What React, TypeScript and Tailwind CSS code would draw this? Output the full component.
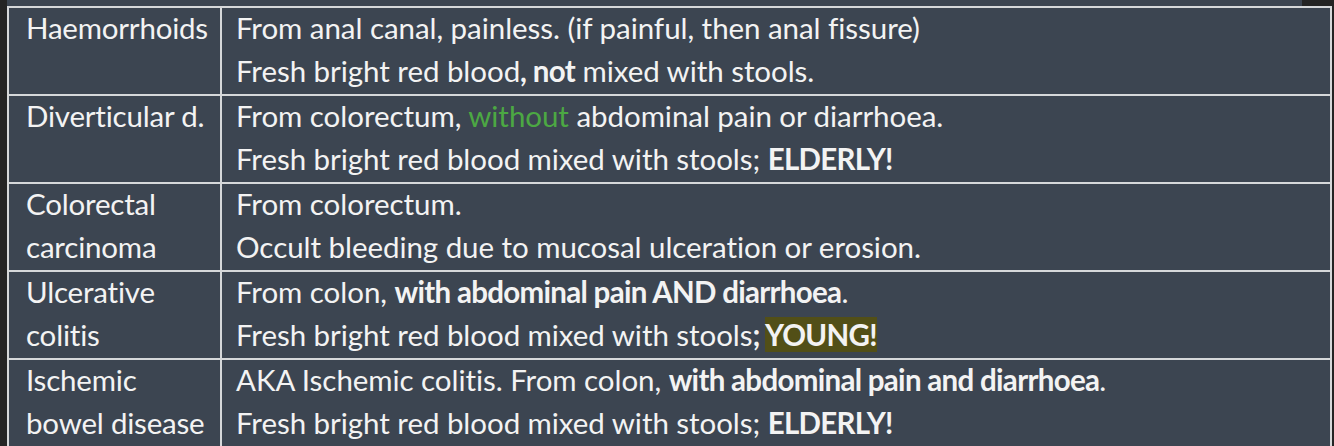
import type { ReactNode } from "react";

const B = ({ children }: { children: ReactNode }) => <b className="-tracking-[0.7px]">{children}</b>;

const rows: { name: ReactNode; lines: ReactNode[] }[] = [
  {
    name: "Haemorrhoids",
    lines: [
      "From anal canal, painless. (if painful, then anal fissure)",
      <>Fresh bright red blood<B>, not</B> mixed with stools.</>,
    ],
  },
  {
    name: "Diverticular d.",
    lines: [
      <>From colorectum, <span className="text-[#4ca843]">without</span> abdominal pain or diarrhoea.</>,
      <>Fresh bright red blood mixed with stools; <B>ELDERLY!</B></>,
    ],
  },
  {
    name: <>Colorectal<br />carcinoma</>,
    lines: ["From colorectum.", "Occult bleeding due to mucosal ulceration or erosion."],
  },
  {
    name: <>Ulcerative<br />colitis</>,
    lines: [
      <>From colon, <B>with abdominal pain AND diarrhoea</B>.</>,
      <>Fresh bright red blood mixed with stools<B>; <span className="bg-[#524f17]">YOUNG!</span></B></>,
    ],
  },
  {
    name: <>Ischemic<br />bowel disease</>,
    lines: [
      <>AKA Ischemic colitis. From colon, <B>with abdominal pain and diarrhoea</B>.</>,
      <>Fresh bright red blood mixed with stools; <B>ELDERLY!</B></>,
    ],
  },
];

export default function App() {
  return (
    <div className="flex h-[446px] w-[1334px] overflow-hidden bg-[#242424] font-['Lato',sans-serif] text-[29.5px] leading-[43px] text-[#f3f3f3] [font-variant-ligatures:none]">
      <div className="w-[7px] shrink-0" />
      <div className="flex w-[1325px] flex-col">
        <div className="flex h-[6px] shrink-0">
          <div className="w-[1295px] bg-[#3c4551]" />
        </div>
        <div className="flex-1 border-x-2 border-t-2 border-[#d6d8da] bg-[#3c4551]">
          {rows.map((row, i) => (
            <div key={i} className="flex h-[88px] border-b-2 border-[#d6d8da]">
              <div className="w-[213px] shrink-0 whitespace-nowrap border-r-2 border-[#d6d8da] pl-[17px] -tracking-[0.2px]">
                <div className="-mt-[2px]">{row.name}</div>
              </div>
              <div className="-mt-[2px] flex-1 pl-[14px] -tracking-[0.05px]">
                {row.lines.map((l, j) => (
                  <div key={j} className="whitespace-nowrap">{l}</div>
                ))}
              </div>
            </div>
          ))}
        </div>
      </div>
    </div>
  );
}
